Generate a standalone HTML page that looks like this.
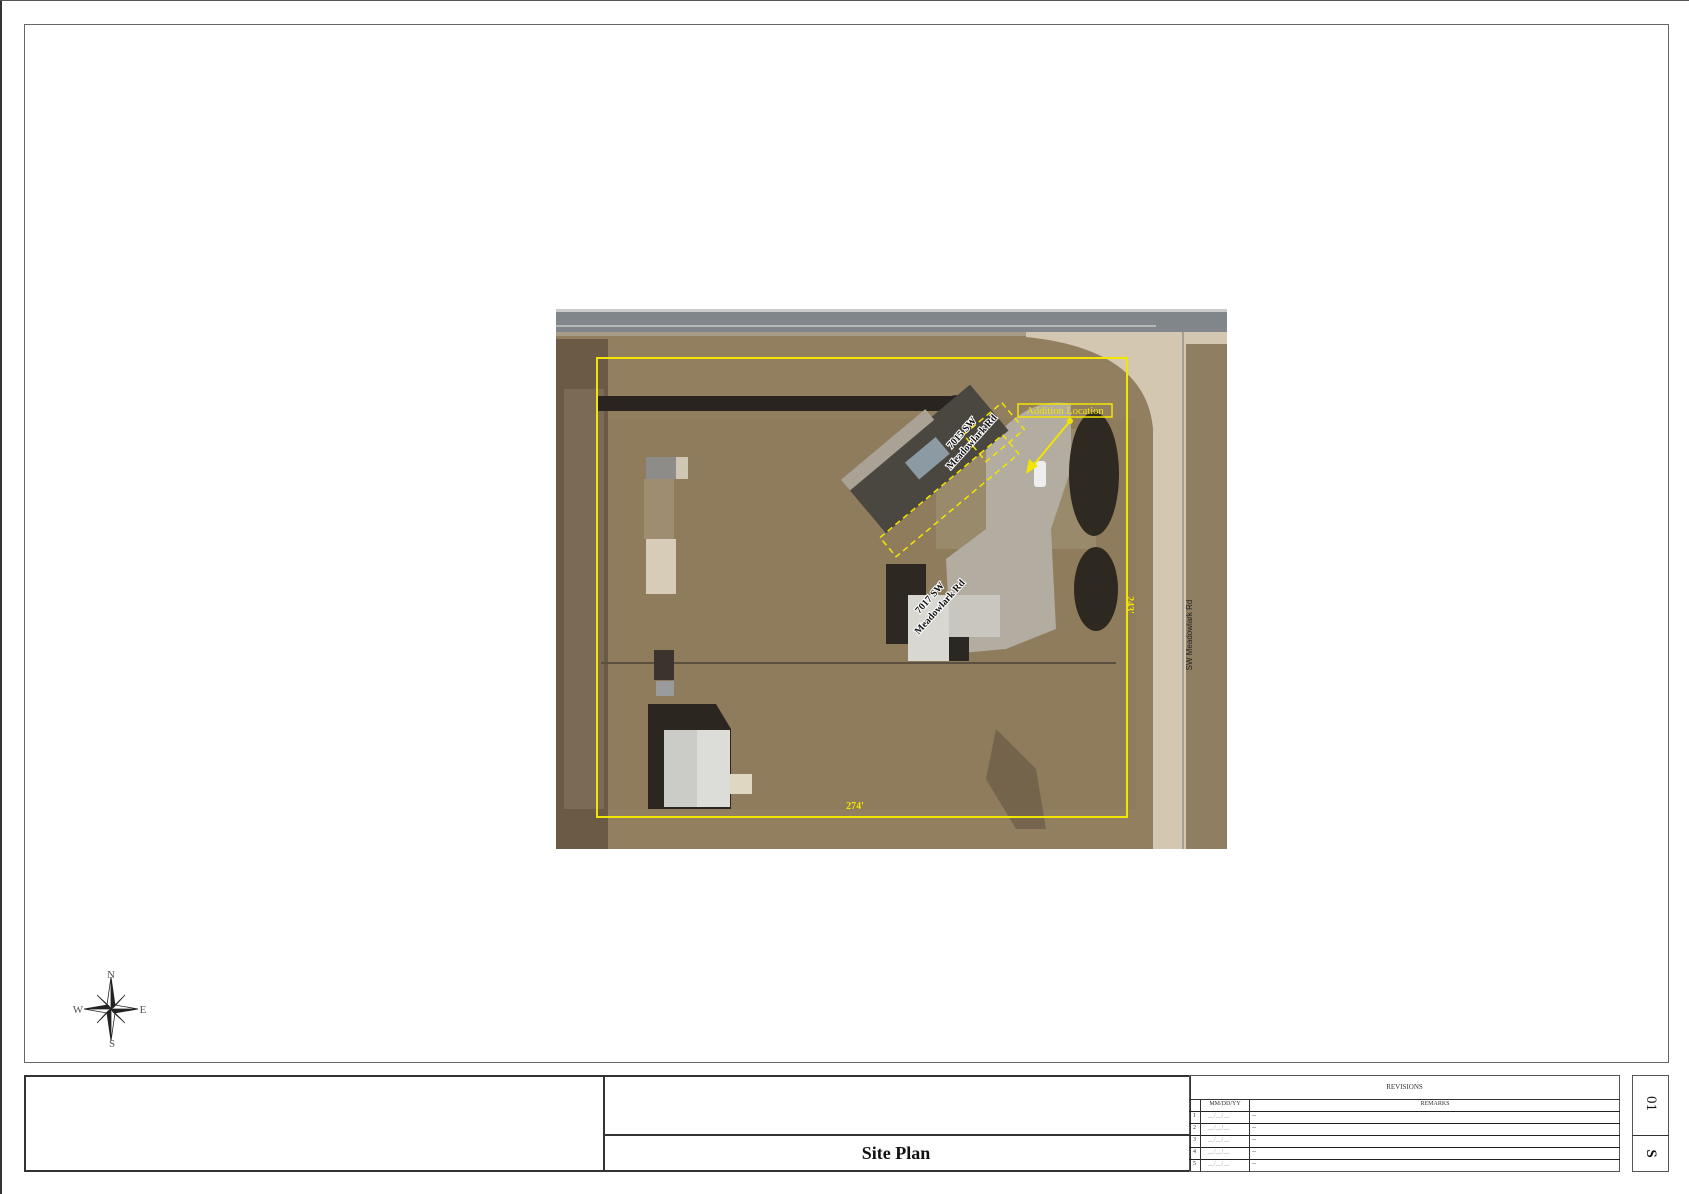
<!DOCTYPE html>
<html><head><meta charset="utf-8"><style>
html,body{margin:0;padding:0;background:#fff;width:1689px;height:1194px;overflow:hidden;position:relative;font-family:"Liberation Serif",serif}
.a{position:absolute;box-sizing:border-box}
.t{position:absolute;font-size:7px;color:#333;white-space:nowrap}
</style></head><body>
<div class="a" style="left:0;top:0;width:2px;height:1194px;background:#333"></div>
<div class="a" style="left:0;top:0;width:1689px;height:1px;background:#555"></div>
<div class="a" style="left:24px;top:24px;width:1645px;height:1039px;border:1.5px solid #666"></div>

<!-- map -->
<svg class="a" style="left:556px;top:309px" width="671" height="540" viewBox="0 0 671 540">
<rect width="671" height="540" fill="#927f60"/>
<rect x="40" y="110" width="540" height="390" fill="#8e7c5c"/>
<rect x="380" y="120" width="160" height="120" fill="#9a8a6c"/>
<!-- road top -->
<rect x="0" y="0" width="671" height="23" fill="#80868a"/>
<rect x="0" y="0" width="671" height="3" fill="#c9ccc9"/>
<rect x="0" y="16" width="600" height="2" fill="#b5b8b4"/>
<rect x="0" y="23" width="671" height="4" fill="#a79c86"/>
<!-- right road -->
<path d="M470 23 L671 23 L671 50 L648 50 L650 540 L597 540 L597 120 Q590 40 470 28 Z" fill="#d3c7b1"/>
<rect x="630" y="35" width="41" height="505" fill="#8f7e62"/>
<path d="M597 230 Q620 250 630 240 L630 270 L597 265 Z" fill="#d3c7b1"/>
<line x1="627" y1="23" x2="627" y2="540" stroke="#777" stroke-width="1"/>
<!-- left tree band -->
<rect x="0" y="30" width="52" height="510" fill="#6a5a46"/>
<rect x="8" y="80" width="40" height="420" fill="#8a7a65" opacity=".5"/>
<!-- shadow band -->
<path d="M42 87 L395 87 Q405 84 410 92 L412 102 L42 102 Z" fill="#2a2420"/>
<!-- sheds left -->
<rect x="90" y="148" width="30" height="22" fill="#8e8c88"/>
<rect x="120" y="148" width="12" height="22" fill="#cfc6b4"/>
<rect x="88" y="170" width="30" height="60" fill="#9e8d70"/>
<rect x="90" y="230" width="30" height="55" fill="#d6ccb8"/>
<!-- drive gravel -->
<path d="M430 140 Q470 85 515 95 L515 160 L495 220 L500 320 L450 340 L395 345 L390 250 L430 220 Z" fill="#b3aca0"/>
<!-- house 7015 -->
<g transform="translate(372,150) rotate(-40)">
<rect x="-80" y="-30" width="160" height="60" fill="#4a4640"/>
<rect x="-20" y="-12" width="40" height="22" fill="#8c9aa4"/>
<rect x="-80" y="-40" width="110" height="14" fill="#a9a295"/>
</g>
<!-- trees right -->
<ellipse cx="538" cy="165" rx="25" ry="62" fill="#2e2a22"/>
<ellipse cx="540" cy="280" rx="22" ry="42" fill="#2d2920"/>
<!-- car -->
<rect x="478" y="152" width="12" height="26" rx="3" fill="#eee"/>
<!-- building 7017 -->
<rect x="330" y="255" width="40" height="80" fill="#2d2922"/>
<rect x="352" y="286" width="41" height="66" fill="#d8d7d2"/>
<rect x="393" y="286" width="51" height="42" fill="#c9c6bf"/>
<rect x="393" y="328" width="20" height="24" fill="#2b2722"/>
<line x1="45" y1="354" x2="560" y2="354" stroke="#5c5040" stroke-width="2"/>
<!-- bottom buildings -->
<rect x="98" y="341" width="20" height="30" fill="#3a342c"/>
<rect x="100" y="372" width="18" height="15" fill="#9a9b9c"/>
<path d="M92 395 L160 395 L175 420 L175 500 L92 500 Z" fill="#2c2620"/>
<rect x="108" y="421" width="66" height="77" fill="#dcdcd8"/>
<rect x="108" y="421" width="33" height="77" fill="#cbcbc7"/>
<rect x="174" y="465" width="22" height="20" fill="#e0d7c2"/>
<!-- trees bottom right -->
<path d="M440 420 L480 460 L490 520 L460 520 L430 470 Z" fill="#5a4c3c" opacity=".5"/>
<!-- yellow property -->
<rect x="41" y="49" width="530" height="459" fill="none" stroke="#f2e500" stroke-width="2"/>
<!-- addition dashed -->
<g transform="translate(370,190) rotate(-40)" fill="none" stroke="#f2e500" stroke-width="1.5" stroke-dasharray="6,4">
<rect x="-60" y="0" width="160" height="25"/>
<rect x="70" y="-25" width="50" height="35"/>
</g>
<line x1="514" y1="112" x2="476" y2="158" stroke="#f2e500" stroke-width="2"/>
<path d="M470 165 L473 150 L482 157 Z" fill="#f2e500"/>
<circle cx="514" cy="112" r="3" fill="#f2e500"/>
<rect x="462" y="95" width="94" height="13" fill="none" stroke="#f2e500" stroke-width="1.5"/>
<text x="509" y="105" font-size="10.5" fill="#f2e500" text-anchor="middle" font-family="Liberation Serif">Addition Location</text>
<g font-family="Liberation Serif" font-weight="bold" font-size="10" fill="#111" stroke="#fff" stroke-width="2" paint-order="stroke">
<text transform="translate(408,126) rotate(-48)" text-anchor="middle">7015 SW</text>
<text transform="translate(418,135) rotate(-48)" text-anchor="middle">Meadowlark Rd</text>
<text transform="translate(376,291) rotate(-48)" text-anchor="middle">7017 SW</text>
<text transform="translate(386,300) rotate(-48)" text-anchor="middle">Meadowlark Rd</text>
</g>
<text transform="translate(571,296) rotate(90)" font-size="10" fill="#f2e500" text-anchor="middle" font-weight="bold" font-family="Liberation Serif">243'</text>
<text x="299" y="500" font-size="10" fill="#f2e500" text-anchor="middle" font-weight="bold" font-family="Liberation Serif">274'</text>
<text transform="translate(636,326) rotate(-90)" font-size="8" fill="#222" text-anchor="middle" font-family="Liberation Sans">SW Meadowlark Rd</text>
</svg>

<!-- compass -->
<svg class="a" style="left:68px;top:970px" width="85" height="80" viewBox="0 0 85 80">
<g transform="translate(43,39)" stroke="#222" stroke-width=".8">
<path d="M0 -32 L4 -4 L0 0 Z" fill="#222"/><path d="M0 -32 L-4 -4 L0 0 Z" fill="#fff"/>
<path d="M0 32 L-4 4 L0 0 Z" fill="#222"/><path d="M0 32 L4 4 L0 0 Z" fill="#fff"/>
<path d="M-27 0 L-4 -4 L0 0 Z" fill="#222"/><path d="M-27 0 L-4 4 L0 0 Z" fill="#fff"/>
<path d="M27 0 L4 4 L0 0 Z" fill="#222"/><path d="M27 0 L4 -4 L0 0 Z" fill="#fff"/>
<path d="M-14 -14 L-2 -3 L0 0 Z M14 -14 L3 -2 L0 0 Z M14 14 L2 3 L0 0 Z M-14 14 L-3 2 L0 0 Z" fill="#333"/>
</g>
<g font-family="Liberation Serif" font-size="11" fill="#555" text-anchor="middle">
<text x="43" y="8">N</text><text x="44" y="77">S</text><text x="10" y="43">W</text><text x="75" y="43">E</text>
</g>
</svg>

<!-- title block -->
<div class="a" style="left:24px;top:1075px;width:1167px;height:97px;border:2px solid #333"></div>
<div class="a" style="left:603px;top:1075px;width:2px;height:97px;background:#333"></div>
<div class="a" style="left:1189px;top:1075px;width:2px;height:97px;background:#333"></div>
<div class="a" style="left:603px;top:1134px;width:588px;height:2px;background:#333"></div>
<div class="a" style="left:603px;top:1143px;width:586px;text-align:center;font-weight:bold;font-size:18px;color:#111">Site Plan</div>

<!-- revisions -->
<div class="a" style="left:1189px;top:1075px;width:431px;height:97px;border:1.5px solid #555"></div>
<div class="t" style="left:1189px;top:1083px;width:431px;text-align:center">REVISIONS</div>
<div class="a" style="left:1189px;top:1099px;width:431px;height:1px;background:#333"></div>
<div class="a" style="left:1189px;top:1111px;width:431px;height:1px;background:#222"></div>
<div class="a" style="left:1189px;top:1123px;width:431px;height:1px;background:#222"></div>
<div class="a" style="left:1189px;top:1135px;width:431px;height:1px;background:#222"></div>
<div class="a" style="left:1189px;top:1147px;width:431px;height:1px;background:#222"></div>
<div class="a" style="left:1189px;top:1159px;width:431px;height:1px;background:#222"></div>
<div class="a" style="left:1200px;top:1099px;width:1px;height:73px;background:#333"></div>
<div class="a" style="left:1249px;top:1099px;width:1px;height:73px;background:#333"></div>
<div class="t" style="left:1201px;top:1101px;width:48px;text-align:center;font-size:6px">MM/DD/YY</div>
<div class="t" style="left:1250px;top:1101px;width:370px;text-align:center;font-size:6px">REMARKS</div>
<div class="t" style="left:1193px;top:1113px;font-size:6px">1</div><div class="t" style="left:1208px;top:1113px;font-size:6px;color:#888">__/__/__</div><div class="t" style="left:1252px;top:1113px;font-size:6px">--</div>
<div class="t" style="left:1193px;top:1125px;font-size:6px">2</div><div class="t" style="left:1208px;top:1125px;font-size:6px;color:#888">__/__/__</div><div class="t" style="left:1252px;top:1125px;font-size:6px">--</div>
<div class="t" style="left:1193px;top:1137px;font-size:6px">3</div><div class="t" style="left:1208px;top:1137px;font-size:6px;color:#888">__/__/__</div><div class="t" style="left:1252px;top:1137px;font-size:6px">--</div>
<div class="t" style="left:1193px;top:1149px;font-size:6px">4</div><div class="t" style="left:1208px;top:1149px;font-size:6px;color:#888">__/__/__</div><div class="t" style="left:1252px;top:1149px;font-size:6px">--</div>
<div class="t" style="left:1193px;top:1161px;font-size:6px">5</div><div class="t" style="left:1208px;top:1161px;font-size:6px;color:#888">__/__/__</div><div class="t" style="left:1252px;top:1161px;font-size:6px">--</div>

<!-- sheet -->
<div class="a" style="left:1632px;top:1075px;width:37px;height:97px;border:1.5px solid #555"></div>
<div class="a" style="left:1632px;top:1135px;width:37px;height:1px;background:#333"></div>
<div class="a" style="left:1632px;top:1095px;width:37px;text-align:center;transform:rotate(90deg);font-size:15px;color:#111">01</div>
<div class="a" style="left:1632px;top:1145px;width:37px;text-align:center;transform:rotate(90deg);font-size:15px;font-weight:bold;color:#111">S</div>
</body></html>
